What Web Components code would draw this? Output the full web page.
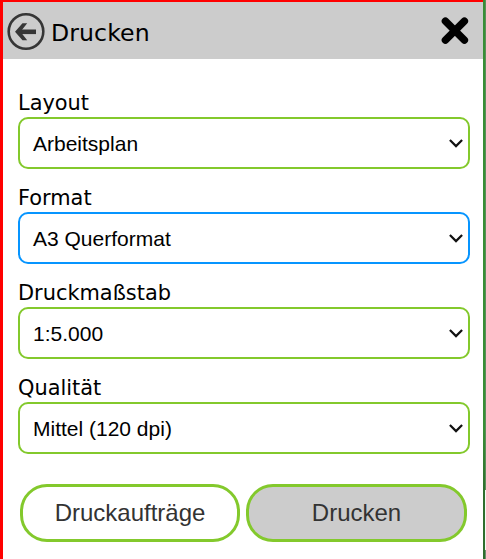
<!DOCTYPE html>
<html lang="de">
<head>
<meta charset="utf-8">
<title>Drucken</title>
<style>
html,body{margin:0;height:100%;overflow:hidden;background:#fff}
</style>
</head>
<body>
<print-dialog></print-dialog>
<script>
class DialogHeader extends HTMLElement {
  constructor() {
    super();
    this.attachShadow({mode: 'open'}).innerHTML = `
<style>
:host{display:flex;align-items:center;box-sizing:border-box;height:57px;flex:none;padding:0 13px 0 4px;background:#ccc;color:#000;font-size:23.6px}
.title{flex:1;margin-left:6px;line-height:30px;padding-top:4px;letter-spacing:.1px}
svg{display:block;flex:none;overflow:visible}
</style>
<svg class="back" width="38" height="38" viewBox="0 0 38 38" fill="none" stroke="#363636">
<circle cx="19" cy="19.5" r="17.3" stroke-width="2.6"/>
<path d="M29 19.8H12" stroke-width="4.6"/>
<path d="M8 19.8L15.5 11.3H20.2L13.5 19.8L20.2 28.3H15.5Z" fill="#363636" stroke="none"/>
</svg>
<span class="title"><slot></slot></span>
<svg class="close" width="30" height="30" viewBox="0 0 30 30" stroke="#000" stroke-width="7.4" stroke-linecap="round"><path d="M5.4 5.2L24.4 24.2M24.4 5.2L5.4 24.2"/></svg>`;
  }
}
customElements.define('dialog-header', DialogHeader);

class SelectField extends HTMLElement {
  constructor() {
    super();
    this.attachShadow({mode: 'open'}).innerHTML = `
<style>
:host{display:block;height:95px;--line:#83c92c}
:host([focused]){--line:#0795ff}
.label{height:26px;line-height:24px;font-size:20.9px;color:#000}
.box{display:flex;align-items:center;justify-content:space-between;box-sizing:border-box;height:52px;border:2px solid var(--line);border-radius:10px;padding:2px 5px 0 13px;background:#fff;color:#000;font:21px/28px "Liberation Sans",Arial,sans-serif}
svg{display:block;margin-top:-2px}
</style>
<div class="label"><slot name="label"></slot></div>
<div class="box"><slot></slot>
<svg width="14" height="10" viewBox="0 0 14 10" fill="none" stroke="#111" stroke-width="2.2"><path d="M.9 2L7 8.1L13.1 2"/></svg></div>`;
  }
}
customElements.define('select-field', SelectField);

class PillButton extends HTMLElement {
  constructor() {
    super();
    this.attachShadow({mode: 'open'}).innerHTML = `
<style>
:host{display:flex;align-items:center;justify-content:center;box-sizing:border-box;height:58px;border:3px solid #83c92c;border-radius:27px;background:#fff;color:#333;font:24px/28px "Liberation Sans",Arial,sans-serif}
:host([primary]){background:#ccc}
</style><slot></slot>`;
  }
}
customElements.define('pill-button', PillButton);

class PrintDialog extends HTMLElement {
  constructor() {
    super();
    this.attachShadow({mode: 'open'}).innerHTML = `
<style>
:host{display:grid;grid-template-columns:minmax(0,1fr) 3px;height:559px;font-family:"DejaVu Sans",Verdana,sans-serif}
.panel{display:flex;flex-direction:column;box-sizing:border-box;border-left:3px solid red;border-top:2px solid red;background:#fff}
.fields{padding:32px 13px 0 15px}
.actions{display:grid;grid-template-columns:220px 221px;gap:6px;padding:13px 16px 0 17px}
.map{display:grid;grid-template-columns:2px 1px;grid-template-rows:490px 60px 9px}
.edge{grid-row:1/4;background:linear-gradient(#398e35 0 430px,#2f6e2d 490px)}
.a{background:#5c8d5b}.b{background:#f4faf4}.c{background:#6e8c6d}
</style>
<div class="panel">
<dialog-header>Drucken</dialog-header>
<div class="fields">
<select-field><span slot="label">Layout</span>Arbeitsplan</select-field>
<select-field focused><span slot="label">Format</span>A3 Querformat</select-field>
<select-field><span slot="label">Druckmaßstab</span>1:5.000</select-field>
<select-field><span slot="label">Qualität</span>Mittel (120 dpi)</select-field>
</div>
<div class="actions"><pill-button>Druckaufträge</pill-button><pill-button primary>Drucken</pill-button></div>
</div>
<div class="map"><div class="edge"></div><div class="a"></div><div class="b"></div><div class="c"></div></div>`;
  }
}
customElements.define('print-dialog', PrintDialog);
</script>
</body>
</html>
